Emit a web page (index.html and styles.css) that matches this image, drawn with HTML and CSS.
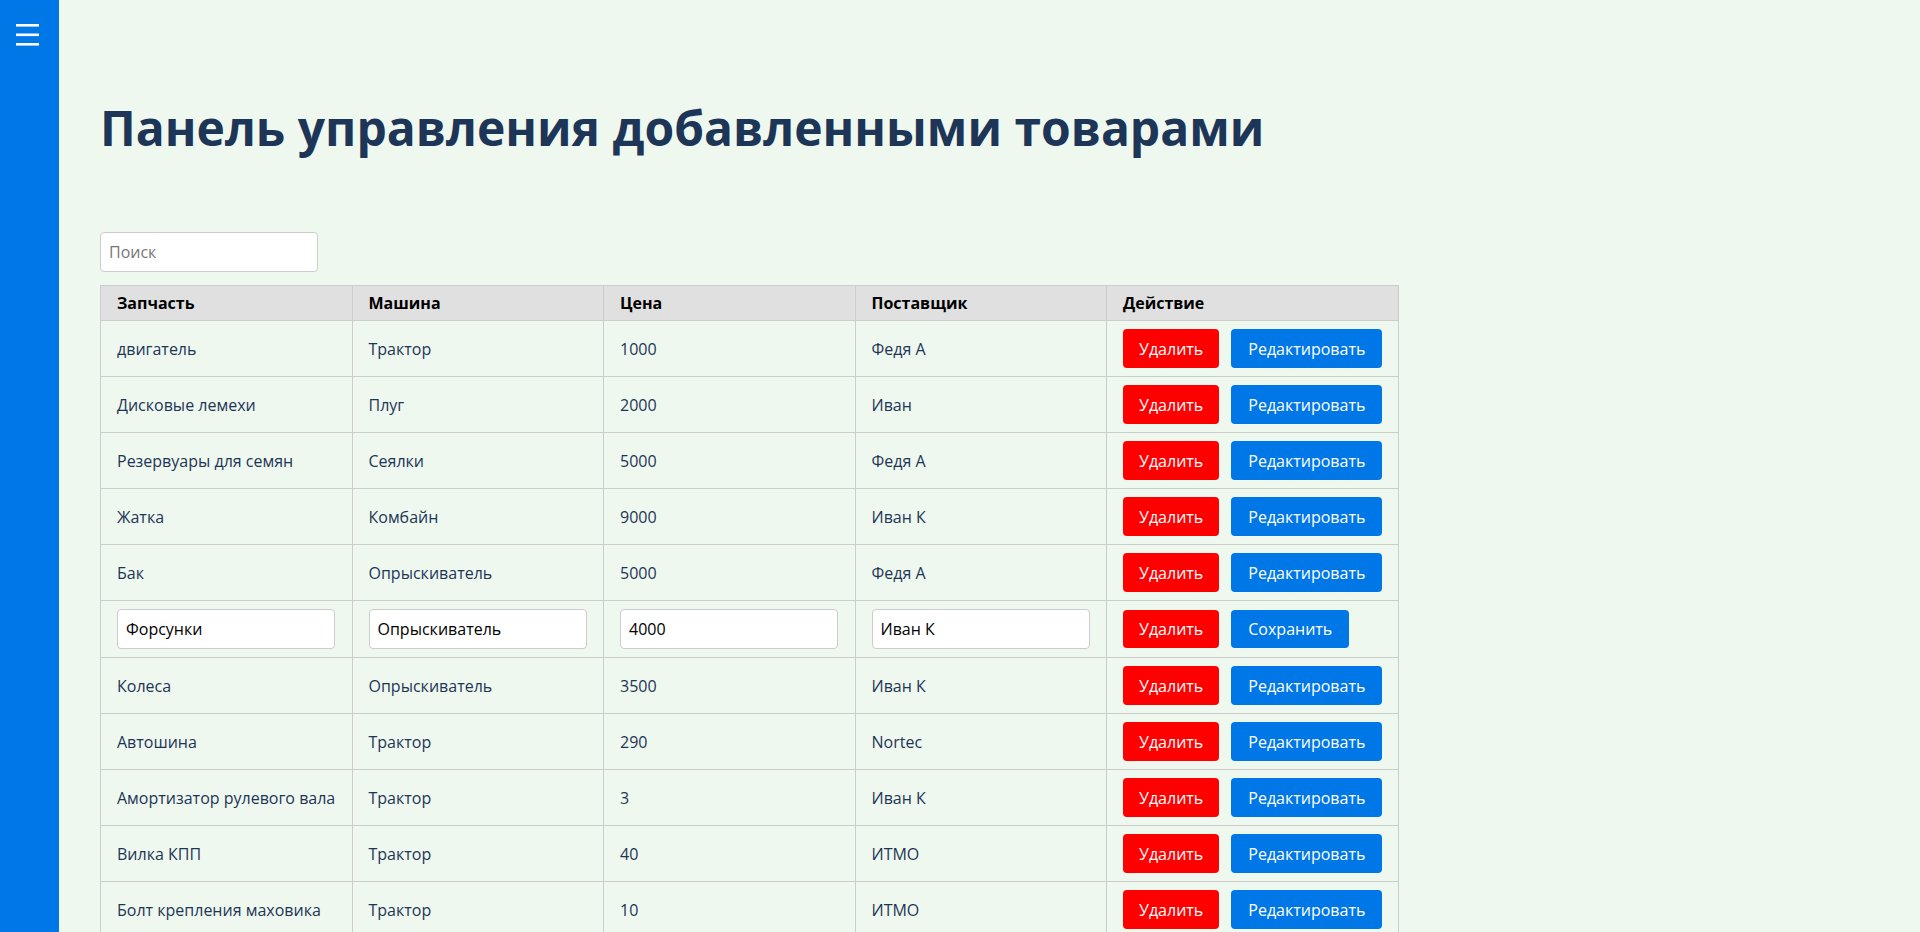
FILE: index.html
```html
<!DOCTYPE html>
<html lang="ru">
<head>
<meta charset="utf-8">
<title>Панель управления</title>
<link rel="stylesheet" href="styles.css">
</head>
<body>
<div class="layout">
  <aside class="sidebar">
    <button class="burger" aria-label="Меню">
      <svg width="23" height="22" viewBox="0 0 23 22"><rect x="0" y="0" width="23" height="2.6" fill="#fff"/><rect x="0" y="9.5" width="23" height="2.6" fill="#fff"/><rect x="0" y="19" width="23" height="2.6" fill="#fff"/></svg>
    </button>
  </aside>
  <main class="main">
    <h1 class="title">Панель управления добавленными товарами</h1>
    <input class="field search" type="text" placeholder="Поиск">
    <table class="grid">
      <thead>
        <tr><th>Запчасть</th><th>Машина</th><th>Цена</th><th>Поставщик</th><th>Действие</th></tr>
      </thead>
      <tbody>
        <tr><td>двигатель</td><td>Трактор</td><td>1000</td><td>Федя А</td><td class="acts"><button class="btn del">Удалить</button><button class="btn edit">Редактировать</button></td></tr>
        <tr><td>Дисковые лемехи</td><td>Плуг</td><td>2000</td><td>Иван</td><td class="acts"><button class="btn del">Удалить</button><button class="btn edit">Редактировать</button></td></tr>
        <tr><td>Резервуары для семян</td><td>Сеялки</td><td>5000</td><td>Федя А</td><td class="acts"><button class="btn del">Удалить</button><button class="btn edit">Редактировать</button></td></tr>
        <tr><td>Жатка</td><td>Комбайн</td><td>9000</td><td>Иван К</td><td class="acts"><button class="btn del">Удалить</button><button class="btn edit">Редактировать</button></td></tr>
        <tr><td>Бак</td><td>Опрыскиватель</td><td>5000</td><td>Федя А</td><td class="acts"><button class="btn del">Удалить</button><button class="btn edit">Редактировать</button></td></tr>
        <tr class="editing"><td><input class="field" type="text" value="Форсунки"></td><td><input class="field" type="text" value="Опрыскиватель"></td><td><input class="field" type="text" value="4000"></td><td><input class="field" type="text" value="Иван К"></td><td class="acts"><button class="btn del">Удалить</button><button class="btn edit">Сохранить</button></td></tr>
        <tr><td>Колеса</td><td>Опрыскиватель</td><td>3500</td><td>Иван К</td><td class="acts"><button class="btn del">Удалить</button><button class="btn edit">Редактировать</button></td></tr>
        <tr><td>Автошина</td><td>Трактор</td><td>290</td><td>Nortec</td><td class="acts"><button class="btn del">Удалить</button><button class="btn edit">Редактировать</button></td></tr>
        <tr><td>Амортизатор рулевого вала</td><td>Трактор</td><td>3</td><td>Иван К</td><td class="acts"><button class="btn del">Удалить</button><button class="btn edit">Редактировать</button></td></tr>
        <tr><td>Вилка КПП</td><td>Трактор</td><td>40</td><td>ИТМО</td><td class="acts"><button class="btn del">Удалить</button><button class="btn edit">Редактировать</button></td></tr>
        <tr><td>Болт крепления маховика</td><td>Трактор</td><td>10</td><td>ИТМО</td><td class="acts"><button class="btn del">Удалить</button><button class="btn edit">Редактировать</button></td></tr>
      </tbody>
    </table>
  </main>
</div>
</body>
</html>
```

FILE: styles.css
```css
* { box-sizing: border-box; }
html, body { margin: 0; padding: 0; height: 100%; }
body {
  font-family: "Open Sans", "Noto Sans", sans-serif;
  font-size: 16px;
  background: #eff8ee;
  color: #1d3557;
  overflow: hidden;
}
.layout {
  display: flex;
  height: 100vh;
  overflow: hidden;
}
.sidebar {
  flex: 0 0 59px;
  width: 59px;
  background: #0077e6;
  display: flex;
  flex-direction: column;
  align-items: flex-start;
}
.burger {
  margin: 24px 0 0 16px;
  padding: 0;
  border: 0;
  background: transparent;
  width: 23px;
  height: 22px;
  display: block;
  cursor: pointer;
}
.burger svg { display: block; }
.main {
  flex: 1;
  padding: 98px 41px 0;
  min-width: 0;
}
.title {
  margin: 0 0 74px;
  font-size: 48px;
  font-weight: 700;
  line-height: 60px;
  color: #1d3557;
}
.field {
  display: block;
  width: 218px;
  height: 40px;
  padding: 8px;
  font-family: inherit;
  font-size: 16px;
  line-height: 22px;
  color: #000;
  background: #fff;
  border: 1px solid #cccccc;
  border-radius: 4px;
  outline: none;
}
.field::placeholder { color: #777; }
.search { margin: 0 0 13px; }
.grid {
  border-collapse: collapse;
  border: 1px solid #cccccc;
}
.grid th {
  background: #e0e0e0;
  color: #000;
  font-weight: 700;
  text-align: left;
  padding: 6px 16px;
  line-height: 22px;
  border: 1px solid #cccccc;
}
.grid td {
  padding: 8px 16px;
  line-height: 22px;
  height: 56px;
  border: 1px solid #cccccc;
  vertical-align: middle;
  white-space: nowrap;
}
.grid td:nth-child(-n+4) { width: 251.5px; }
.acts { font-size: 0; }
.grid td.acts { padding-right: 16px; }
.btn {
  font-family: inherit;
  font-size: 16px;
  line-height: 22px;
  padding: 8px 16px;
  height: 38.5px;
  border: 0;
  border-radius: 4px;
  color: #fff;
  cursor: pointer;
  vertical-align: middle;
}
.btn.edit { padding: 8px 17px; }
.btn + .btn { margin-left: 12px; }
.del { background: #ff0000; }
.edit { background: #0077e6; }
```
